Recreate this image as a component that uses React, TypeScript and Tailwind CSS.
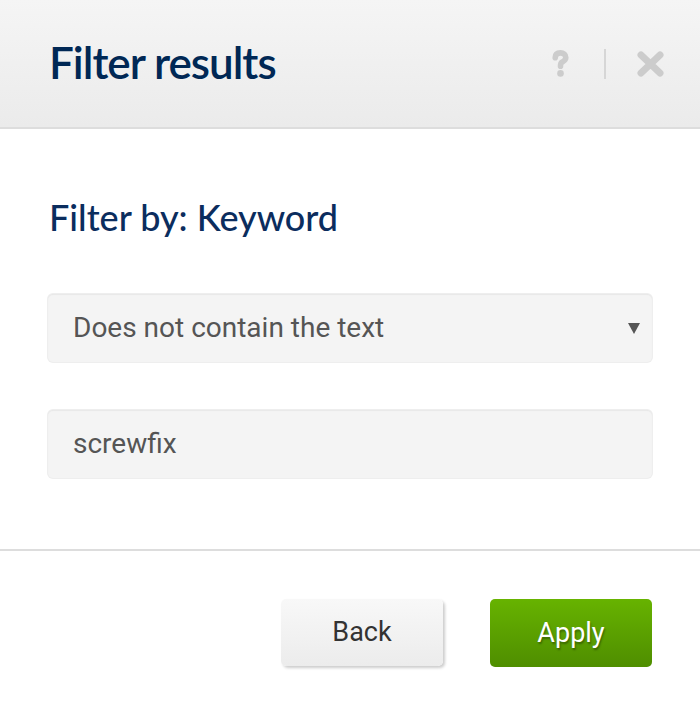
import React from 'react';

const HelpIcon: React.FC = () => (
    <svg width="17" height="27" viewBox="0 0 17 27" className="block">
        <path d="M3.2 7.8 C3.2 4.2 5.6 2.9 8.5 2.9 C11.6 2.9 13.8 4.7 13.8 7.4 C13.8 10.1 11.6 11.1 10 12.1 C8.8 12.9 8.5 13.9 8.5 16.2" stroke="#cccccc" strokeWidth="5.6" strokeLinecap="round" fill="none" />
        <circle cx="8.5" cy="23.4" r="3.3" fill="#cccccc" />
    </svg>
);

const CloseIcon: React.FC = () => (
    <svg width="29" height="28" viewBox="0 0 29 28" className="block">
        <path d="M5 5 L24 23 M24 5 L5 23" stroke="#cccccc" strokeWidth="7" strokeLinecap="round" fill="none" />
    </svg>
);

const Field: React.FC<{ children: React.ReactNode }> = ({ children }) => (
    <div className="h-[68px] w-full rounded-[5px] bg-[#f4f4f4] shadow-[inset_0_1px_1px_rgba(0,0,0,0.05),0_0_0_1px_#eeeeee] flex items-center pl-[25px] pr-[12px] text-[28px] text-[#555555] font-['Roboto',sans-serif]">
        {children}
    </div>
);

const App: React.FC = () => {
    return (
        <div className="w-[700px] h-[721px] bg-white overflow-hidden">
            {/* header */}
            <div className="h-[129px] bg-gradient-to-b from-[#f5f5f5] to-[#ebebeb] border-b-2 border-[#dddddd] flex items-center justify-between pl-[49px] pr-[35px]">
                <h2 className="text-[44px] leading-none font-semibold tracking-[-1px] text-[#002855] font-['Lato',sans-serif] pb-[3px]">
                    Filter results
                </h2>
                <div className="flex items-center">
                    <HelpIcon />
                    <div className="w-[2px] h-[30px] bg-[#d6d6d6] ml-[35px] mr-[30px]" />
                    <CloseIcon />
                </div>
            </div>

            {/* body */}
            <div className="px-[48px] pt-[70px] pb-[71px] border-b-2 border-[#dddddd]">
                <h3 className="text-[36px] leading-none font-medium text-[#0b2d5e] font-['Lato',sans-serif] mb-[59px] pl-[1px]">
                    Filter by: Keyword
                </h3>
                <Field>
                    <span className="flex-1">Does not contain the text</span>
                    <svg width="12" height="11" viewBox="0 0 12 11" className="block">
                        <path d="M0 0 H12 L6 11 Z" fill="#555555" />
                    </svg>
                </Field>
                <div className="h-[48px]" />
                <Field>screwfix</Field>
            </div>

            {/* footer */}
            <div className="flex justify-end gap-[47px] pr-[48px] pt-[48px]">
                <button className="w-[162px] h-[67px] rounded-[5px] bg-gradient-to-b from-[#f8f8f8] to-[#ececec] shadow-[2px_2px_3px_rgba(0,0,0,0.2)] text-[27px] text-[#333333] font-['Roboto',sans-serif]">
                    Back
                </button>
                <button className="w-[162px] h-[68px] rounded-[5px] bg-gradient-to-b from-[#67b300] to-[#4f8e00] text-[27px] text-white font-['Roboto',sans-serif] [text-shadow:1px_2px_2px_rgba(0,0,0,0.35)]">
                    Apply
                </button>
            </div>
        </div>
    );
};

export default App;
